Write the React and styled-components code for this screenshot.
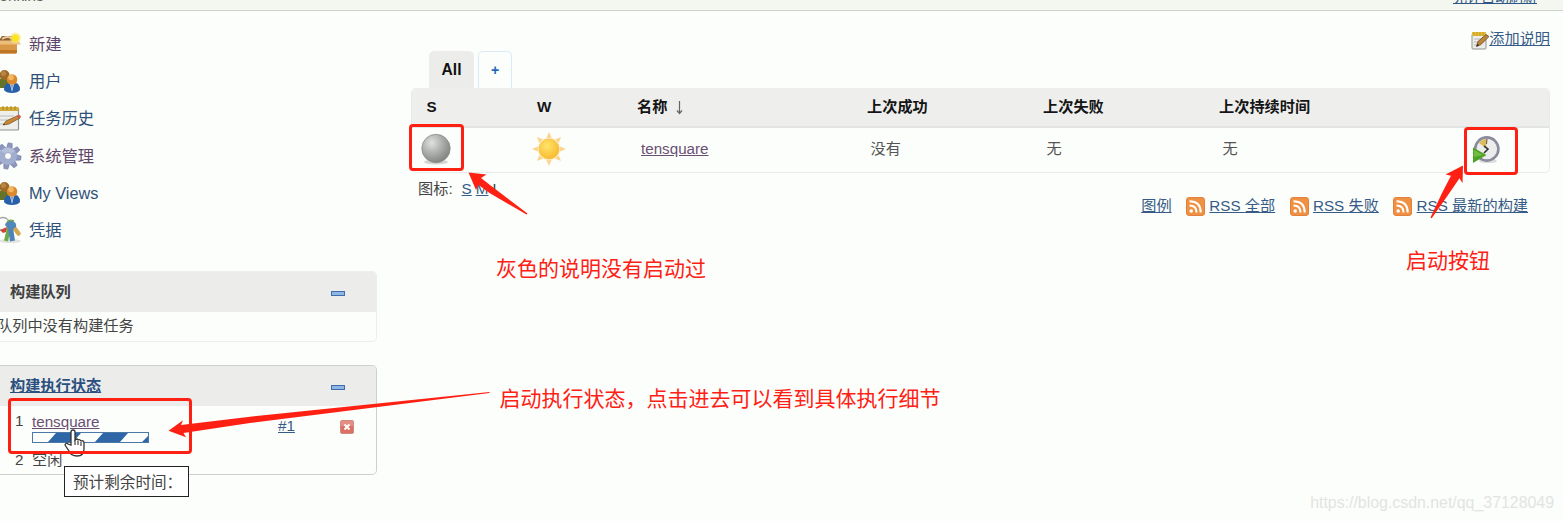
import React from "react";
import styled, { createGlobalStyle } from "styled-components";

const Global = createGlobalStyle`
  * { box-sizing: border-box; }
  body {
    margin: 0;
    background: #fcfefb;
    overflow: hidden;
    font-family: "Liberation Sans", "Noto Sans CJK SC", sans-serif;
    font-size: 15.2px;
    color: #444;
  }
`;

const Page = styled.div`
  position: relative;
  width: 1563px;
  height: 521px;
  overflow: hidden;
`;

const TopBar = styled.header`
  height: 11px;
  overflow: hidden;
  display: flex;
  justify-content: space-between;
  align-items: flex-end;
  background: #f3f7f0;
  border-bottom: 1px solid #cfd3cd;
`;

const Crumb = styled.div`
  margin: 0 0 5px -8px;
  line-height: 18px;
  display: flex;
  gap: 24px;
  color: #6a6460;
`;

const RefreshLink = styled.a`
  margin: 0 26px 4px 0;
  font-size: 14px;
  line-height: 18px;
  color: #2f5584;
  text-decoration: underline;
`;

const Columns = styled.div`
  display: flex;
  align-items: flex-start;
`;

const Sidebar = styled.aside`
  width: 377px;
  padding-top: 14px;
`;

const TaskList = styled.nav`
  display: flex;
  flex-direction: column;
  margin-bottom: 22.5px;
`;

const Task = styled.a`
  height: 37.3px;
  display: flex;
  align-items: center;
  gap: 7px;
  margin-left: -4px;
  font-size: 16.3px;
  line-height: 20px;
  color: ${(p) => (p.$visited ? "#5d4468" : "#2f5078")};

  svg { flex: none; }
`;

const Pane = styled.section`
  height: ${(p) => p.$height}px;
  margin-bottom: 23px;
  border: 1px solid ${(p) => p.$line};
  border-left: 0;
  border-radius: 0 5px 5px 0;
  overflow: hidden;
`;

const PaneHead = styled.div`
  height: 40px;
  padding: 0 31px 0 10px;
  display: flex;
  align-items: center;
  justify-content: space-between;
  background: #ecedeb;
  font-weight: bold;
  line-height: 20px;
  color: ${(p) => (p.$link ? "#2a4f80" : "#404040")};
  text-decoration: ${(p) => (p.$link ? "underline" : "none")};
`;

const Collapse = styled.i`
  width: 14px;
  height: 5px;
  margin-top: 3px;
  border: 1px solid #3e6eaa;
  background: #8fb6e6;
`;

const QueueText = styled.div`
  margin-left: -3px;
  line-height: 28px;
`;

const Executor = styled.div`
  display: flex;
  height: ${(p) => p.$height}px;
  padding-left: 15px;
  line-height: 18px;
`;

const Num = styled.span`
  width: 17px;
`;

const Job = styled.div`
  width: 246px;
`;

const ExecLabel = styled.div`
  padding-top: 6px;
`;

const Link = styled.a`
  color: ${(p) => (p.$visited ? "#6b4f73" : "#365b86")};
  text-decoration: underline;
  line-height: 20px;
`;

const Progress = styled.div`
  width: 117px;
  height: 11px;
  border: 1px solid #4c78a8;
  svg { display: block; }
`;

const BuildNo = styled.div`
  width: 62px;
  padding-top: 4px;
`;

const StopCell = styled.div`
  padding-top: 8px;
  svg { display: block; }
`;

const Main = styled.main`
  width: 1139px;
  margin-left: 34px;
`;

const AddNote = styled.div`
  height: 40px;
  padding-top: 18px;
  display: flex;
  justify-content: flex-end;
  align-items: flex-start;
  line-height: 20px;
  svg { margin-top: 2px; }
`;

const Tabs = styled.div`
  display: flex;
  gap: 4px;
  padding-left: 18px;
`;

const Tab = styled.div`
  width: ${(p) => (p.$active ? 45 : 34)}px;
  height: 37px;
  border-radius: 5px 5px 0 0;
  border: ${(p) => (p.$active ? "0" : "1px solid #d9ebf8")};
  border-bottom: 0;
  background: ${(p) => (p.$active ? "#ecedeb" : "transparent")};
  color: ${(p) => (p.$active ? "#111" : "#1f68b8")};
  font-size: ${(p) => (p.$active ? 15.6 : 14)}px;
  font-weight: bold;
  line-height: ${(p) => (p.$active ? 38 : 36)}px;
  text-align: center;
`;

const Table = styled.div`
  border: 1px solid #e9ebe9;
  border-top: 0;
  border-radius: 5px;
  overflow: hidden;
`;

const Row = styled.div`
  display: grid;
  grid-template-columns: 110.5px 100px 230px 176px 176px 254px 1fr;
  align-items: center;
  height: ${(p) => (p.$head ? 40 : 44)}px;
  padding: ${(p) => (p.$head ? "0 0 0 14.5px" : "0 0 2px 9px")};
  background: ${(p) => (p.$head ? "#eeefed" : "transparent")};
  border-bottom: ${(p) => (p.$head ? "2px solid #e3e5e3" : "0")};
  font-weight: ${(p) => (p.$head ? "bold" : "normal")};
  color: ${(p) => (p.$head ? "#151515" : "#555")};
  line-height: 20px;
`;

const Cell = styled.div`
  padding-left: ${(p) => p.$indent || 0}px;
  display: flex;
  align-items: center;
  gap: 8px;
`;

const BallCell = styled(Cell)`
  margin-left: -1px;
`;

const Footer = styled.div`
  display: flex;
  justify-content: space-between;
  align-items: flex-start;
  padding: 6px 22px 0 7px;
  line-height: 20px;
`;

const Sizes = styled.div`
  display: flex;
  gap: 4px;
  span { margin-right: 5px; }
`;

const Feeds = styled.div`
  display: flex;
  gap: 14.5px;
  padding-top: 17px;
`;

const Feed = styled.div`
  display: flex;
  gap: 4.3px;
  svg { margin-top: 1px; }
`;

const Highlight = styled.div`
  position: absolute;
  left: ${(p) => p.$x}px;
  top: ${(p) => p.$y}px;
  width: ${(p) => p.$w}px;
  height: ${(p) => p.$h}px;
  border: 3px solid #ff2014;
  border-radius: 4px;
`;

const Arrows = styled.svg`
  position: absolute;
  inset: 0;
`;

const Note = styled.div`
  position: absolute;
  left: ${(p) => p.$x}px;
  top: ${(p) => p.$y}px;
  font-size: 21px;
  line-height: 30px;
  white-space: nowrap;
  color: #ff2014;
`;

const Cursor = styled.svg`
  position: absolute;
  left: 63px;
  top: 428px;
`;

const Tooltip = styled.div`
  position: absolute;
  left: 64px;
  top: 466px;
  width: 125px;
  height: 31px;
  padding-left: 8px;
  border: 1px solid #222;
  background: #fff;
  font-size: 15.6px;
  line-height: 31px;
  white-space: nowrap;
`;

const Watermark = styled.div`
  position: absolute;
  right: 9px;
  bottom: 8px;
  font-size: 15.9px;
  line-height: 20px;
  color: #e2e4e2;
`;

const BoxIcon = () => (
  <svg width="26" height="26" viewBox="0 0 26 26">
    <path d="M3 9 6 5h13l3 5H3z" fill="#8c5e2e" />
    <path d="M6 8q5-4 12 0" stroke="#e7c99a" strokeWidth="2" fill="none" />
    <path d="M2 11h19v10q0 1.500-2 1.500H2z" fill="#d99748" />
    <path d="M2 19h19v2q0 1.500-2 1.500H2z" fill="#bf7626" />
    <path d="M0 9.500h22l3 4H0z" fill="#edbd7c" />
    <circle cx="19.500" cy="7" r="5.500" fill="#f8e77c" opacity=".65" />
    <circle cx="19.500" cy="7" r="3.500" fill="#fbe420" />
  </svg>
);

const PeopleIcon = () => (
  <svg width="26" height="26" viewBox="0 0 26 26">
    <path d="M0 20q0-10 8-10t8 10z" fill="#66742a" />
    <circle cx="8.500" cy="7" r="5" fill="#9d6a26" />
    <circle cx="7.500" cy="5.500" r="2.500" fill="#b98542" />
    <path d="M8 22q0-8 8-8t8 8q-2 3-8 3t-8-3z" fill="#285fa9" />
    <path d="m14 16 2 8 2-8z" fill="#dce8f5" />
    <path d="m15 17 1 6 1-6z" fill="#6f98cb" />
    <circle cx="16" cy="11.500" r="5.300" fill="#dd8a2c" />
    <circle cx="15" cy="9.500" r="2.800" fill="#f4b766" />
  </svg>
);

const NotepadIcon = () => (
  <svg width="26" height="26" viewBox="0 0 26 26">
    <rect x="1" y="3" width="21.500" height="22" rx="1" fill="#eeefeb" stroke="#8f938f" strokeWidth="1.200" />
    <path d="M1 2h21.500v4H1z" fill="#d3ac38" />
    <path d="M3 1v4M7 1v4M11 1v4M15 1v4M19 1v4" stroke="#a48220" />
    <path d="M4 11h14M4 15h10M4 19h8" stroke="#b9bcb9" />
    <path d="m7 20 3-4 11-5 3 2-11 6z" fill="#c88736" stroke="#76502a" strokeWidth=".7" />
    <path d="m20.500 10.800 2-1q2.500.5 2.500 2.200l-1.500 1.500z" fill="#d3554a" />
    <path d="m7 20 2-.5-1-1z" fill="#333" />
  </svg>
);

const EditIcon = () => (
  <svg width="18" height="19" viewBox="0 0 18 19">
    <rect x="1" y="3" width="14" height="15" rx="1" fill="#ecedeb" stroke="#90938f" />
    <path d="M1 1h14v4H1z" fill="#e4bd38" />
    <path d="M3 1v4M6 1v4M9 1v4M12 1v4" stroke="#af8a28" strokeWidth=".7" />
    <path d="M3 8h7M3 11h4M3 14h3" stroke="#b6bab7" />
    <path d="m5.500 15.500 1.500-5 8-7 3 2-8 8z" fill="#bd843c" stroke="#69471f" strokeWidth=".8" />
    <path d="m5.500 15.500 2.500-1-1.300-2z" fill="#2f2922" />
  </svg>
);

const teeth = [0, 45, 90, 135, 180, 225, 270, 315];

const GearIcon = () => (
  <svg width="26" height="28" viewBox="0 0 26 28">
    <g fill="#8c98c0" stroke="#69759f" strokeWidth=".6">
      {teeth.map((a) => (
        <path key={a} d="m9.500 6 .8-5h4l.8 5z" transform={`rotate(${a + 8} 12 14)`} />
      ))}
    </g>
    <circle cx="12" cy="14" r="9" fill="#a2aed0" />
    <path d="M5 9q7-7 14 0l-7 5z" fill="#bdc7df" opacity=".7" />
    <circle cx="12" cy="14" r="3.500" fill="#fcfefb" stroke="#8a95bb" strokeWidth=".8" />
  </svg>
);

const KeysIcon = () => (
  <svg width="26" height="28" viewBox="0 0 26 28">
    <ellipse cx="14" cy="25" rx="11" ry="2" fill="#e1e3df" />
    <circle cx="7" cy="8" r="6.500" fill="none" stroke="#a3a6a4" strokeWidth="1.300" />
    <path d="m16 9 6.500 8.500" stroke="#d3aa4e" strokeWidth="4.500" strokeLinecap="round" />
    <path d="m13 12-3 13" stroke="#6cab48" strokeWidth="4" />
    <path d="m14 9 2.500 16" stroke="#4d83bb" strokeWidth="5" />
    <path d="M9 9q2-6 8-4 4 2 3 6l-6 4z" fill="#5287b9" />
    <path d="M11 6q3-3 7-1" stroke="#77a654" strokeWidth="1.500" fill="none" />
    <path d="m4 14 7-3-1 5-3 1z" fill="#cb4538" />
  </svg>
);

const BallIcon = () => (
  <svg width="32" height="34" viewBox="0 0 32 34">
    <defs>
      <radialGradient id="ball" cx=".35" cy=".3" r=".7">
        <stop offset="0" stopColor="#e0e2df" />
        <stop offset=".5" stopColor="#b0b2af" />
        <stop offset="1" stopColor="#858784" />
      </radialGradient>
    </defs>
    <ellipse cx="16" cy="30" rx="12" ry="2.500" fill="#d5d7d4" />
    <circle cx="16" cy="16.500" r="14.200" fill="url(#ball)" stroke="#8b8e8a" strokeWidth=".8" />
  </svg>
);

const SunIcon = () => (
  <svg width="34" height="34" viewBox="0 0 34 34">
    <defs>
      <radialGradient id="sun" cx=".4" cy=".35" r=".7">
        <stop offset="0" stopColor="#ffe46a" />
        <stop offset="1" stopColor="#f8b92c" />
      </radialGradient>
    </defs>
    {teeth.map((a) => (
      <path key={a} d="M13.500 8 17 0l3.500 8z" fill="#fbd48b" transform={`rotate(${a} 17 17)`} />
    ))}
    <circle cx="17" cy="17" r="11.300" fill="#fff0c4" />
    <circle cx="17" cy="17" r="10" fill="url(#sun)" stroke="#f5b23c" strokeWidth=".6" />
  </svg>
);

const ClockIcon = () => (
  <svg width="30" height="31" viewBox="0 0 30 31">
    <ellipse cx="17" cy="27" rx="9" ry="2" fill="#d9dbd8" />
    <circle cx="15.800" cy="15" r="11.600" fill="#ececea" stroke="#8a8c9e" strokeWidth="2.600" />
    <path d="m15 14-7-5q3-4 8-4z" fill="#dbbc5c" />
    <path d="m13 12 4 3-4 4" stroke="#353535" strokeWidth="1.600" fill="none" />
    <path d="m16 5-.5 5" stroke="#66573a" />
    <path d="M2 13.500 15.500 21 2 29z" fill="#4da326" />
    <path d="m3 16 9 5-9 2z" fill="#6fbd42" />
  </svg>
);

const RssIcon = () => (
  <svg width="19" height="19" viewBox="0 0 19 19">
    <rect x=".5" y=".5" width="18" height="18" rx="2.500" fill="#ef9142" stroke="#e3813c" />
    <circle cx="5.200" cy="14" r="1.800" fill="#fff" />
    <path d="M3.500 8.500q7 0 7 7M3.500 4.300q11.200 0 11.200 11.200" fill="none" stroke="#fff" strokeWidth="2" />
  </svg>
);

const StopIcon = () => (
  <svg width="14" height="14" viewBox="0 0 14 14">
    <rect x=".5" y=".5" width="13" height="13" rx="1.500" fill="#dc7064" stroke="#d08880" />
    <path d="M1 1h12v5H1z" fill="#e79b91" opacity=".7" />
    <path d="m4.500 4.500 5 5m0-5-5 5" stroke="#fff" strokeWidth="2" />
  </svg>
);

const SortArrow = () => (
  <svg width="9" height="15" viewBox="0 0 9 15">
    <path d="M4.500 1v12M2 10.500l2.500 3 2.500-3" fill="none" stroke="#666" strokeWidth="1.200" />
  </svg>
);

const tasks = [
  { label: "新建", Icon: BoxIcon, visited: true },
  { label: "用户", Icon: PeopleIcon },
  { label: "任务历史", Icon: NotepadIcon },
  { label: "系统管理", Icon: GearIcon, visited: true },
  { label: "My Views", Icon: PeopleIcon },
  { label: "凭据", Icon: KeysIcon },
];

const highlights = [
  [409, 124, 55, 47],
  [1464, 127, 54, 48],
  [8, 398, 184, 56],
];

const notes = [
  [496, 254, "灰色的说明没有启动过"],
  [1406, 246, "启动按钮"],
  [499.5, 384, "启动执行状态，点击进去可以看到具体执行细节"],
];

export default function App() {
  return (
    <Page>
      <Global />
      <TopBar>
        <Crumb><span>Jenkins</span><span>›</span></Crumb>
        <RefreshLink>允许自动刷新</RefreshLink>
      </TopBar>
      <Columns>
        <Sidebar>
          <TaskList>
            {tasks.map(({ label, Icon, visited }) => (
              <Task key={label} $visited={visited}><Icon />{label}</Task>
            ))}
          </TaskList>
          <Pane $height={71} $line="#eceeec">
            <PaneHead>构建队列<Collapse /></PaneHead>
            <QueueText>队列中没有构建任务</QueueText>
          </Pane>
          <Pane $height={110} $line="#cdd0cd">
            <PaneHead $link>构建执行状态<Collapse /></PaneHead>
            <Executor $height={45}>
              <Num><ExecLabel>1</ExecLabel></Num>
              <Job>
                <ExecLabel><Link $visited>tensquare</Link></ExecLabel>
                <Progress>
                  <svg width="115" height="9" viewBox="0 0 115 9">
                    <path d="M15 9 23 0h25l-8 9zM62 9 70 0h25l-8 9zM109 9l6-6v6z" fill="#2e66a8" />
                  </svg>
                </Progress>
              </Job>
              <BuildNo><ExecLabel><Link>#1</Link></ExecLabel></BuildNo>
              <StopCell><ExecLabel><StopIcon /></ExecLabel></StopCell>
            </Executor>
            <Executor $height={20}><Num>2</Num>空闲</Executor>
          </Pane>
        </Sidebar>
        <Main>
          <AddNote><EditIcon /><Link>添加说明</Link></AddNote>
          <Tabs><Tab $active>All</Tab><Tab>+</Tab></Tabs>
          <Table>
            <Row $head>
              <Cell>S</Cell><Cell>W</Cell>
              <Cell>名称<SortArrow /></Cell>
              <Cell>上次成功</Cell><Cell>上次失败</Cell><Cell>上次持续时间</Cell><Cell />
            </Row>
            <Row>
              <BallCell><BallIcon /></BallCell>
              <Cell><SunIcon /></Cell>
              <Cell $indent={9.5}><Link $visited>tensquare</Link></Cell>
              <Cell $indent={9}>没有</Cell>
              <Cell $indent={9}>无</Cell>
              <Cell $indent={9}>无</Cell>
              <Cell $indent={3.5}><ClockIcon /></Cell>
            </Row>
          </Table>
          <Footer>
            <Sizes><span>图标:</span><Link>S</Link><Link>M</Link><span>L</span></Sizes>
            <Feeds>
              <Link>图例</Link>
              {["全部", "失败", "最新的构建"].map((name) => (
                <Feed key={name}><RssIcon /><Link>RSS {name}</Link></Feed>
              ))}
            </Feeds>
          </Footer>
        </Main>
      </Columns>

      <Cursor width="24" height="30" viewBox="0 0 24 30">
        <path
          d="M8 17V4q0-2 2-2t2 2v8q2-2 3 0 2-1 3 1 3-1 3 2v6q0 7-7 7-6 0-8-5l-4-6q1-3 3-1z"
          fill="#fff" stroke="#333" strokeWidth="1.300"
        />
        <path d="M12 12v5M15 13v4M18 14v4" stroke="#333" strokeWidth="1.100" />
      </Cursor>
      {highlights.map(([x, y, w, h]) => (
        <Highlight key={x} $x={x} $y={y} $w={w} $h={h} />
      ))}
      <Arrows width="1563" height="521" viewBox="0 0 1563 521" fill="#ff2014">
        <path d="m468.500 172.500 18 2-5.500 3.500 9 7L527.500 213.500l-1 1-37-21.500-11-8-2.500 5z" />
        <path d="m1463 165.500-17.500 9 5.500 1.200-8.500 16.300-12 25.500 1.200.8 16.500-23.500 11.300-16.500 3 5z" />
        <path d="m168.500 430.700 14.500-10.500-2 4.800 69-8.300L489.500 392v1L250 423l-66.500 9.900 2.500 4.300z" />
      </Arrows>
      {notes.map(([x, y, text]) => (
        <Note key={text} $x={x} $y={y}>{text}</Note>
      ))}
      <Tooltip>预计剩余时间：</Tooltip>
      <Watermark>https://blog.csdn.net/qq_37128049</Watermark>
    </Page>
  );
}
